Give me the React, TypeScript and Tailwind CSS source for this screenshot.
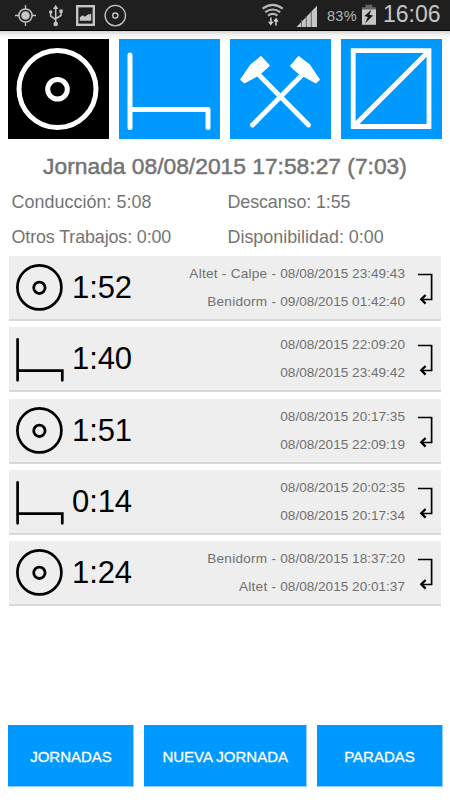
import React from "react";

type Kind = "drive" | "rest";

interface Stop {
  place?: string;
  date: string;
}

interface Entry {
  kind: Kind;
  time: string;
  from: Stop;
  to: Stop;
}

const entries: Entry[] = [
  { kind: "drive", time: "1:52", from: { place: "Altet - Calpe", date: "08/08/2015 23:49:43" }, to: { place: "Benidorm", date: "09/08/2015 01:42:40" } },
  { kind: "rest", time: "1:40", from: { date: "08/08/2015 22:09:20" }, to: { date: "08/08/2015 23:49:42" } },
  { kind: "drive", time: "1:51", from: { date: "08/08/2015 20:17:35" }, to: { date: "08/08/2015 22:09:19" } },
  { kind: "rest", time: "0:14", from: { date: "08/08/2015 20:02:35" }, to: { date: "08/08/2015 20:17:34" } },
  { kind: "drive", time: "1:24", from: { place: "Benidorm", date: "08/08/2015 18:37:20" }, to: { place: "Altet", date: "08/08/2015 20:01:37" } },
];

function StatusBar() {
  return (
    <header className="flex h-[31px] items-start border-b border-black bg-[#1f1f1f] text-[#c6c6c6]">
      <svg className="h-[30px] w-[135px] shrink-0" viewBox="0 0 135 30" fill="none" stroke="#c6c6c6">
        <circle cx="25.5" cy="15.5" r="6.6" strokeWidth="1.5" />
        <circle cx="25.5" cy="15.5" r="4.3" fill="#c6c6c6" stroke="none" />
        <path d="M25.5 5v4M25.5 22v4M15 15.5h4M32 15.5h4" strokeWidth="1.3" />
        <path d="M55.7 8v15M50.7 12v4.2l5 3.3M61 11v4.5l-5 3" strokeWidth="1.5" />
        <path d="M55.7 4.8l2.6 4.2h-5.2z" fill="#c6c6c6" stroke="none" />
        <circle cx="55.7" cy="24" r="2.3" fill="#c6c6c6" stroke="none" />
        <circle cx="50.7" cy="12" r="1.7" fill="#c6c6c6" stroke="none" />
        <rect x="59.4" y="9.5" width="3.3" height="3.3" fill="#c6c6c6" stroke="none" />
        <rect x="77.2" y="6.2" width="16.6" height="18.6" strokeWidth="2.4" />
        <path d="M79.8 20.8v-3.6l3-2 2.2 1.5 3.5-2.7 1 .8 1.7-1.6v7.6z" fill="#c6c6c6" stroke="none" />
        <circle cx="115.3" cy="15.6" r="10.2" strokeWidth="1.3" />
        <circle cx="115.3" cy="15.6" r="2.6" strokeWidth="1.4" />
      </svg>
      <svg className="ml-[125px] h-[30px] w-[60px] shrink-0" viewBox="260 0 60 30" fill="none" stroke="#b8b8b8">
        <path d="M262.6 8.7q10-7.5 20.2 0M265.2 12.2q7.4-5.4 15 0M268 15.6q4.8-3.4 9.4 0" strokeWidth="2.2" />
        <path d="M270.9 17.5v6M276 25.5v-5.5" strokeWidth="1.5" stroke="#d5d5d5" />
        <path d="M268 21.8h5.6l-2.8 3.6zM273.2 21.6h5.6l-2.8-3.8z" fill="#d5d5d5" stroke="none" />
        <path d="M317 5.7V27h-20.5z" fill="#c6c6c6" stroke="none" />
        <path d="M301.5 20v7M306.3 16v11M311.3 11v16" stroke="#656565" strokeWidth="1" />
      </svg>
      <span className="ml-[7px] mt-[6px] w-[31px] shrink-0 whitespace-nowrap text-[14.5px] leading-5 tracking-[0.3px] text-[#b4b4b4]">83%</span>
      <svg className="ml-[3px] h-[30px] w-[16px] shrink-0" viewBox="361 0 16 30">
        <path d="M365.5 4.8h6.7v2.4h-6.7zM362 7.2h14v3h-14z" fill="#656565" />
        <path d="M362 9.5h14v15.3h-14z" fill="#c6c6c6" />
        <path d="M371.4 9.7l-7 6.3 3.5 1-3 6.5 8.2-8-3.8-.8z" fill="#151515" />
      </svg>
      <span className="ml-[6px] shrink-0 whitespace-nowrap text-[23px] leading-[29px]">16:06</span>
    </header>
  );
}

function DiscTile() {
  return (
    <svg className="size-full" viewBox="0 0 101 100" fill="none" stroke="#fff" strokeWidth="5">
      <circle cx="49.5" cy="50" r="38.5" />
      <circle cx="49.5" cy="50.3" r="9.8" />
    </svg>
  );
}

function BedTile() {
  return (
    <svg className="size-full" viewBox="0 0 101 100" fill="none" stroke="#fff" strokeWidth="5" strokeLinecap="round" strokeLinejoin="round">
      <path d="M11 16v72.5M11 70.5h78v18" />
    </svg>
  );
}

function HammersTile() {
  return (
    <svg className="size-full" viewBox="0 0 101 100" fill="none" stroke="#fff" strokeWidth="4.8" strokeLinecap="round">
      <path d="M29.5 36.5L78.5 86M71.5 36.5L22.5 86" />
      <path
        d="M31 18L38.8 26.7 32.5 32.3 27 36.8 14.3 43.4 11.2 40.5 21 26.3zM68.6 18L79.3 26.3 88.9 40.5 85.8 43.4 73.5 36.8 68.5 33.8 61 27z"
        fill="#fff"
        strokeWidth="1.8"
        strokeLinejoin="round"
      />
    </svg>
  );
}

function SquareTile() {
  return (
    <svg className="size-full" viewBox="0 0 101 100" fill="none" stroke="#fff" strokeWidth="4.8">
      <path d="M12.2 11.7h75.8v75.8H12.2zM13.5 86.5L87 13" />
    </svg>
  );
}

function EntryIcon({ kind }: { kind: Kind }) {
  return (
    <svg className="size-[50px] shrink-0" viewBox="0 0 50 50" fill="none" stroke="#000" strokeWidth="2.7">
      {kind === "drive" ? (
        <>
          <circle cx="25.4" cy="25.4" r="22" />
          <circle cx="25.4" cy="25.8" r="5.7" strokeWidth="2.8" />
        </>
      ) : (
        <path d="M3.6 6.3v41M3.6 37.6h44.7v9.7" strokeLinecap="round" />
      )}
    </svg>
  );
}

function ReturnArrow() {
  return (
    <svg className="h-[34px] w-4 shrink-0" viewBox="0 0 16 34" fill="none" stroke="#000" strokeWidth="1.7">
      <path d="M.9 3.5h13.7v25H4.5" />
      <path d="M8.6 24l-4.3 4.3 4.3 4.3" strokeWidth="2.3" />
    </svg>
  );
}

function StopLine({ stop }: { stop: Stop }) {
  return (
    <p>
      {stop.place && <span className="tracking-[0.25px]">{stop.place} - </span>}
      {stop.date}
    </p>
  );
}

function EntryRow({ entry }: { entry: Entry }) {
  return (
    <li className="flex h-[65px] items-start border-b-2 border-[#d8d8d8] bg-[#eeeeee] pl-[5px] pr-2">
      <div className="mt-[6px]">
        <EntryIcon kind={entry.kind} />
      </div>
      <span className="ml-[8px] mt-[14px] text-[31px] leading-9 tracking-[-0.1px] text-black">{entry.time}</span>
      <div className="ml-auto mt-[4px] whitespace-nowrap text-right text-[13.6px] leading-7 text-[#707070]">
        <StopLine stop={entry.from} />
        <StopLine stop={entry.to} />
      </div>
      <div className="ml-[12px] mt-[15px]">
        <ReturnArrow />
      </div>
    </li>
  );
}

const tile = "h-[100px] w-[101px]";
const action = "h-[62px] border-b border-r border-[#8fccff] bg-[#0099ff] pl-px pt-[3px] text-center text-[15px] text-white [-webkit-text-stroke:0.3px_white]";

export default function App() {
  return (
    <div className="flex h-[800px] w-[450px] flex-col overflow-hidden bg-white font-['Liberation_Sans',Arial,sans-serif]">
      <StatusBar />
      <div className="h-2 shrink-0 bg-linear-to-b from-[#d4d4d4] via-[#f3f3f3] to-white" />
      <nav className="flex shrink-0 justify-between pl-[7.6px] pr-[7.6px]">
        <button className={`${tile} bg-black`}><DiscTile /></button>
        <button className={`${tile} bg-[#0099ff]`}><BedTile /></button>
        <button className={`${tile} bg-[#0099ff]`}><HammersTile /></button>
        <button className={`${tile} bg-[#0099ff]`}><SquareTile /></button>
      </nav>
      <h1 className="mt-[13px] whitespace-nowrap text-center text-[22.8px] leading-7 text-[#747474] [-webkit-text-stroke:0.5px_#747474]">
        Jornada 08/08/2015 17:58:27 (7:03)
      </h1>
      <dl className="mt-[5px] grid grid-cols-[216px_1fr] pl-[11.5px] text-[17.9px] leading-[35px] text-[#747474]">
        <div className="tracking-[0.05px]">Conducción: 5:08</div>
        <div className="tracking-[-0.1px]">Descanso: 1:55</div>
        <div className="tracking-[-0.12px]">Otros Trabajos: 0:00</div>
        <div>Disponibilidad: 0:00</div>
      </dl>
      <ul className="mt-px flex flex-col gap-[6.25px] px-[9px]">
        {entries.map((e) => (
          <EntryRow key={e.time} entry={e} />
        ))}
      </ul>
      <footer className="mb-[13px] mt-auto flex justify-between pl-2 pr-[7.5px]">
        <button className={`${action} w-[126px]`}>JORNADAS</button>
        <button className={`${action} w-[163px]`}>NUEVA JORNADA</button>
        <button className={`${action} w-[126px]`}>PARADAS</button>
      </footer>
    </div>
  );
}
